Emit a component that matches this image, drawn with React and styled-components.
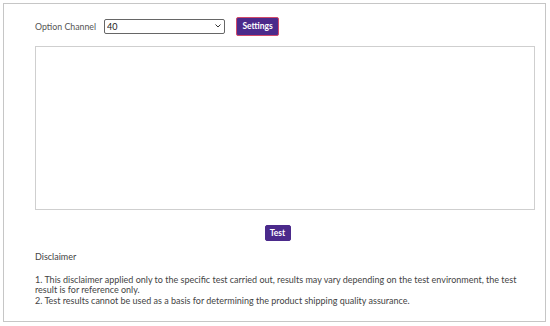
import React from "react";
import styled, { createGlobalStyle } from "styled-components";

const Global = createGlobalStyle`
  html, body { margin: 0; padding: 0; background: #fff; }
  body { font-family: "Lato", "Noto Sans", sans-serif; }
`;

const Frame = styled.div`
  box-sizing: border-box;
  margin: 3px 0 0 3px;
  width: 543px;
  height: 319px;
  border: 1px solid #c6c6c6;
  padding: 12px 10px 0 31px;
  display: flex;
  flex-direction: column;
`;

const Toolbar = styled.div`
  display: flex;
  align-items: center;
  height: 20px;
`;

const Label = styled.span`
  font-size: 8.8px;
  color: #555;
  margin-right: 8px;
`;

const SelectWrap = styled.div`
  position: relative;
  width: 121px;
  height: 15px;
  margin-right: 11px;
`;

const Select = styled.select`
  display: block;
  box-sizing: border-box;
  appearance: none;
  width: 100%;
  height: 100%;
  margin: 0;
  font-family: "Lato", sans-serif;
  font-size: 9px;
  line-height: 13px;
  color: #222;
  padding: 0 0 0 2px;
  border: 1px solid #666;
  border-radius: 2px;
  background: #fff;
`;

const Chevron = styled.svg`
  position: absolute;
  right: 4px;
  top: 5px;
  width: 6px;
  height: 4px;
  pointer-events: none;
`;

const Button = styled.button`
  box-sizing: border-box;
  width: ${(p) => p.$w}px;
  height: ${(p) => p.$h}px;
  background: #4b2a8b;
  color: #fff;
  border: 1px solid ${(p) => (p.$focus ? "#d24a6a" : "#4b2a8b")};
  border-radius: 2px;
  font-family: "Lato", sans-serif;
  font-size: 8.5px;
  font-weight: 700;
  padding: 0;
  display: flex;
  align-items: center;
  justify-content: center;
`;

const Output = styled.div`
  box-sizing: border-box;
  width: 500px;
  height: 164px;
  margin-top: 10px;
  border: 1px solid #cfcfcf;
`;

const ActionRow = styled.div`
  display: flex;
  justify-content: center;
  margin-top: 15px;
  margin-left: -15px;
`;

const Disclaimer = styled.div`
  margin-top: 11px;
  font-size: 9px;
  color: #444;
  width: 500px;
  line-height: 10.5px;
`;

const Title = styled.div`
  margin-bottom: 12px;
`;

export default function App() {
  return (
    <>
      <Global />
      <Frame>
        <Toolbar>
          <Label>Option Channel</Label>
          <SelectWrap>
            <Select defaultValue="40">
              <option value="40">40</option>
            </Select>
            <Chevron viewBox="0 0 6 4">
              <path d="M0.5 0.5 L3 3 L5.5 0.5" fill="none" stroke="#333" strokeWidth="1" />
            </Chevron>
          </SelectWrap>
          <Button $w={43} $h={19} $focus>
            Settings
          </Button>
        </Toolbar>
        <Output />
        <ActionRow>
          <Button $w={26} $h={16}>Test</Button>
        </ActionRow>
        <Disclaimer>
          <Title>Disclaimer</Title>
          <div>
            1. This disclaimer applied only to the specific test carried out, results may vary depending on the test
            environment, the test result is for reference only.
          </div>
          <div>2. Test results cannot be used as a basis for determining the product shipping quality assurance.</div>
        </Disclaimer>
      </Frame>
    </>
  );
}
